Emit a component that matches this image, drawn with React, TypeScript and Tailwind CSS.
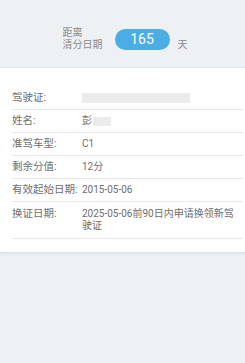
const rows: { label: string; value: React.ReactNode }[] = [
  {
    label: '驾驶证:',
    value: <span className="block h-[10px] w-[108px] bg-[#ececec]" />,
  },
  {
    label: '姓名:',
    value: (
      <span className="flex items-center">
        彭<span className="ml-[1px] block h-[9px] w-[18px] bg-[#ececec]" />
      </span>
    ),
  },
  { label: '准驾车型:', value: 'C1' },
  { label: '剩余分值:', value: '12分' },
  { label: '有效起始日期:', value: '2015-05-06' },
  { label: '换证日期:', value: '2025-05-06前90日内申请换领新驾驶证' },
];

export default function App() {
  return (
    <div
      className="min-h-[363px] w-full bg-[#edf1f4] text-[#6e6e6e]"
      style={{ fontFamily: '"Roboto", "Noto Sans CJK SC", sans-serif' }}
    >
      {/* Header */}
      <div className="flex h-[67px] items-center justify-center pl-[5px] pt-[10px]">
        <div className="flex items-end">
          <div className="flex flex-col text-[10px] leading-[12px] text-[#8a8a8a]">
            <span>距离</span>
            <span>清分日期</span>
          </div>
          <div className="mb-[1px] ml-[12px] flex h-[21px] w-[55px] items-center justify-center rounded-full bg-[#4aaee5] text-[14px] text-white">
            165
          </div>
          <span className="ml-[8px] text-[10px] leading-[12px] text-[#8a8a8a]">天</span>
        </div>
      </div>

      {/* Card */}
      <div className="border-y border-[#e1e5e8] bg-white pl-[12px] pr-[2px] pt-[19px] pb-[13px] shadow-[0_2px_2px_rgba(0,0,0,0.04)]">
        {rows.map((r, i) => (
          <div
            key={r.label}
            className={`flex border-b border-[#e8e8e8] text-[10.5px] leading-[12px] ${
              i === rows.length - 1 ? 'py-[6px]' : 'h-[23px] items-center'
            }`}
          >
            <span className="w-[70px] shrink-0 whitespace-nowrap">{r.label}</span>
            <span className="pr-[4px] text-[10px]">{r.value}</span>
          </div>
        ))}
      </div>
    </div>
  );
}
